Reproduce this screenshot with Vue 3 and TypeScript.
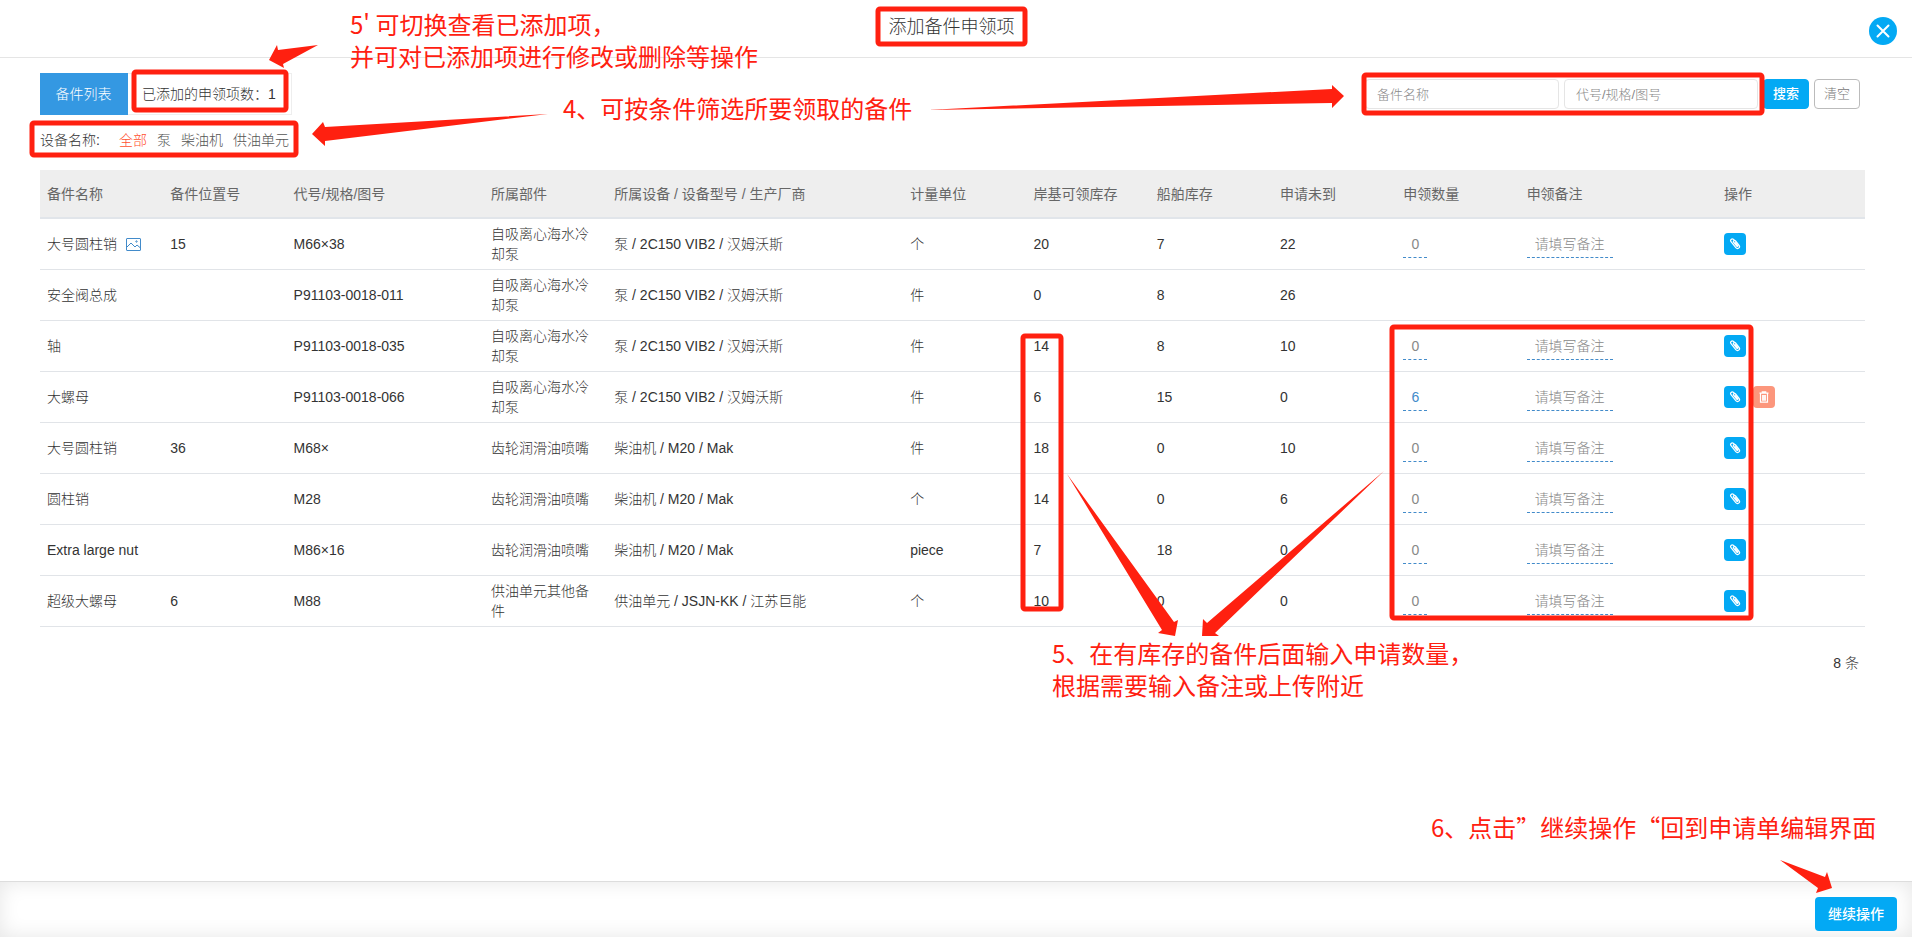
<script setup lang="ts">
import { ref } from 'vue'

interface Part {
  name: string
  image?: boolean
  position: string
  code: string
  component: string
  equipment: string
  unit: string
  shore: number
  ship: number
  pending: number
  quantity: string
  editable: boolean
}

const columns = [
  { title: '备件名称', span: 5 },
  { title: '备件位置号', span: 5 },
  { title: '代号/规格/图号', span: 8 },
  { title: '所属部件', span: 5 },
  { title: '所属设备 / 设备型号 / 生产厂商', span: 12 },
  { title: '计量单位', span: 5 },
  { title: '岸基可领库存', span: 5 },
  { title: '船舶库存', span: 5 },
  { title: '申请未到', span: 5 },
  { title: '申领数量', span: 5 },
  { title: '申领备注', span: 8 },
  { title: '操作', span: 6 },
]
const totalSpan = columns.reduce((sum, c) => sum + c.span, 0)

const pump = '泵 / 2C150 VIB2 / 汉姆沃斯'
const diesel = '柴油机 / M20 / Mak'
const pumpPart = '自吸离心海水冷却泵'
const nozzle = '齿轮润滑油喷嘴'

const parts = ref<Part[]>([
  { name: '大号圆柱销', image: true, position: '15', code: 'M66×38', component: pumpPart, equipment: pump, unit: '个', shore: 20, ship: 7, pending: 22, quantity: '', editable: true },
  { name: '安全阀总成', position: '', code: 'P91103-0018-011', component: pumpPart, equipment: pump, unit: '件', shore: 0, ship: 8, pending: 26, quantity: '', editable: false },
  { name: '轴', position: '', code: 'P91103-0018-035', component: pumpPart, equipment: pump, unit: '件', shore: 14, ship: 8, pending: 10, quantity: '', editable: true },
  { name: '大螺母', position: '', code: 'P91103-0018-066', component: pumpPart, equipment: pump, unit: '件', shore: 6, ship: 15, pending: 0, quantity: '6', editable: true },
  { name: '大号圆柱销', position: '36', code: 'M68×', component: nozzle, equipment: diesel, unit: '件', shore: 18, ship: 0, pending: 10, quantity: '', editable: true },
  { name: '圆柱销', position: '', code: 'M28', component: nozzle, equipment: diesel, unit: '个', shore: 14, ship: 0, pending: 6, quantity: '', editable: true },
  { name: 'Extra large nut', position: '', code: 'M86×16', component: nozzle, equipment: diesel, unit: 'piece', shore: 7, ship: 18, pending: 0, quantity: '', editable: true },
  { name: '超级大螺母', position: '6', code: 'M88', component: '供油单元其他备件', equipment: '供油单元 / JSJN-KK / 江苏巨能', unit: '个', shore: 10, ship: 0, pending: 0, quantity: '', editable: true },
])

const devices = ['全部', '泵', '柴油机', '供油单元']
const activeDevice = ref('全部')
const nameQuery = ref('')
const codeQuery = ref('')

const frames = [
  { x: 878, y: 9, w: 147, h: 35 },
  { x: 134, y: 72, w: 152, h: 38 },
  { x: 32, y: 123, w: 264, h: 32 },
  { x: 1364, y: 75, w: 398, h: 38 },
  { x: 1023, y: 336, w: 38, h: 273 },
  { x: 1392, y: 327, w: 359, h: 291 },
]
const arrows = [
  '318,45 278,50 277,45 269,60 284,68 283,64',
  '548,114 325,127 323,122 312,134 325,146 325,141',
  '928,110 1332,89 1332,85 1344,96 1332,108 1332,103',
  '1067,474 1174,622 1178,620 1175,636 1158,633 1162,630',
  '1384,471 1207,623 1203,619 1202,636 1219,636 1215,633',
  '1780,860 1825,877 1827,872 1832,888 1816,893 1818,888',
]
const notes = [
  { x: 350, y: 34, text: "5' 可切换查看已添加项，" },
  { x: 350, y: 66, text: '并可对已添加项进行修改或删除等操作' },
  { x: 563, y: 118, text: '4、可按条件筛选所要领取的备件' },
  { x: 1052, y: 663, text: '5、在有库存的备件后面输入申请数量，' },
  { x: 1052, y: 695, text: '根据需要输入备注或上传附近' },
  { x: 1431, y: 837, text: '6、点击”继续操作“回到申请单编辑界面' },
]
</script>

<template>
  <div class="page" lang="zh-CN">
    <header class="top">
      <h1>添加备件申领项</h1>
      <button class="close" type="button" aria-label="关闭">
        <svg width="28" height="28" viewBox="0 0 28 28"><path d="M8.5 8.5l11 11M19.5 8.5l-11 11" stroke="#fff" stroke-width="2" stroke-linecap="round" /></svg>
      </button>
    </header>

    <main class="content">
      <div class="toolbar">
        <nav class="tabs">
          <button class="tab active" type="button">备件列表</button>
          <button class="tab" type="button">已添加的申领项数：1</button>
        </nav>
        <form class="search" @submit.prevent>
          <input v-model="nameQuery" type="text" placeholder="备件名称" aria-label="备件名称" />
          <input v-model="codeQuery" type="text" placeholder="代号/规格/图号" aria-label="代号/规格/图号" />
          <button class="btn primary" type="submit">搜索</button>
          <button class="btn" type="reset">清空</button>
        </form>
      </div>

      <div class="filter">
        <span class="label">设备名称:</span>
        <a v-for="d in devices" :key="d" href="#" :class="{ on: d === activeDevice }" @click.prevent="activeDevice = d">{{ d }}</a>
      </div>

      <table>
        <colgroup>
          <col v-for="c in columns" :key="c.title" :style="{ width: (c.span / totalSpan) * 100 + '%' }" />
        </colgroup>
        <thead>
          <tr>
            <th v-for="c in columns" :key="c.title" scope="col">{{ c.title }}</th>
          </tr>
        </thead>
        <tbody>
          <tr v-for="(p, i) in parts" :key="i">
            <td>
              <span class="name">
                {{ p.name }}
                <svg v-if="p.image" width="15" height="13" viewBox="0 0 15 13" fill="none" stroke="#428bca">
                  <rect x=".5" y=".5" width="14" height="12" rx=".5" />
                  <path d="M1 9l4-4 4 4 2-2 3.500 3" />
                  <circle cx="10.500" cy="3.500" r=".7" />
                </svg>
              </span>
            </td>
            <td>{{ p.position }}</td>
            <td>{{ p.code }}</td>
            <td>{{ p.component }}</td>
            <td>{{ p.equipment }}</td>
            <td>{{ p.unit }}</td>
            <td>{{ p.shore }}</td>
            <td>{{ p.ship }}</td>
            <td>{{ p.pending }}</td>
            <td><input v-if="p.editable" v-model="p.quantity" class="edit qty" type="text" placeholder="0" aria-label="申领数量" /></td>
            <td><input v-if="p.editable" class="edit remark" type="text" placeholder="请填写备注" aria-label="申领备注" /></td>
            <td>
              <div v-if="p.editable" class="actions">
                <button class="icon" type="button" aria-label="上传附件">
                  <svg width="12" height="12" viewBox="0 0 12 12" fill="none" stroke="#fff" stroke-width="1.200" stroke-linecap="round">
                    <path d="M6.500 3.200L4.300 1.300C2.800.200.700 2 2 3.700L6.800 9.700C8.600 11.800 11.700 9.500 10.100 7.300L6.600 3C5.500 1.800 3.700 3 4.700 4.500L7.700 8.200C8.400 8.900 9.200 8.200 8.700 7.500L6.200 4.600" />
                  </svg>
                </button>
                <button v-if="p.quantity" class="icon danger" type="button" aria-label="删除">
                  <svg width="10" height="12" viewBox="0 0 10 12" fill="none" stroke="#fff" stroke-width="1.200">
                    <path d="M.5 2.200h9M3.300 2V.8h3.400V2M1.500 2.500v8.700h7V2.500M3.700 4v5.700M5 4v5.700M6.300 4v5.700" />
                  </svg>
                </button>
              </div>
            </td>
          </tr>
        </tbody>
      </table>
      <p class="total">{{ parts.length }} 条</p>
    </main>

    <footer class="bottom">
      <button class="continue" type="button">继续操作</button>
    </footer>

    <svg class="guide" viewBox="0 0 1912 937" preserveAspectRatio="xMinYMin meet">
      <rect v-for="(f, i) in frames" :key="'f' + i" :x="f.x" :y="f.y" :width="f.w" :height="f.h" rx="2" />
      <polygon v-for="(a, i) in arrows" :key="'a' + i" :points="a" />
      <text v-for="(n, i) in notes" :key="'n' + i" :x="n.x" :y="n.y">{{ n.text }}</text>
    </svg>
  </div>
</template>

<style>
body {
  margin: 0;
  background: #fff;
}
</style>

<style scoped>
.page {
  position: relative;
  display: flex;
  flex-direction: column;
  min-height: 100vh;
  font: 300 14px/20px "Liberation Sans", "Noto Sans CJK SC", sans-serif;
  color: #333;
}
.page * {
  box-sizing: border-box;
}
button,
input {
  font: inherit;
  color: inherit;
  margin: 0;
}
button {
  padding: 0;
  border: 0;
  cursor: pointer;
}
.top {
  display: flex;
  align-items: center;
  height: 58px;
  padding: 0 15px 0 34px;
  border-bottom: 1px solid #e5e5e5;
}
h1 {
  flex: 1;
  margin: 0;
  padding-bottom: 4px;
  text-align: center;
  font-size: 18px;
  font-weight: 300;
  line-height: 24px;
}
.close {
  display: flex;
  width: 28px;
  height: 28px;
  margin-top: 4px;
  border-radius: 50%;
  background: #03a9f4;
}
.content {
  flex: 1;
  padding: 15px 47px 0 40px;
}
.toolbar {
  display: flex;
  justify-content: space-between;
  align-items: center;
}
.tabs {
  display: flex;
}
.tab {
  height: 42px;
  padding: 0 15px 0 14px;
  background: #fff;
  border: 1px solid #eee;
  border-left: 0;
}
.tab.active {
  width: 88px;
  background: #3498e2;
  border: 0;
  color: #fff;
}
.search {
  display: flex;
  gap: 5px;
  padding-right: 5px;
}
.search input {
  width: 194px;
  height: 30px;
  padding: 0 11px;
  border: 1px solid #e5e5e5;
  border-radius: 4px;
  font-size: 13px;
  outline: 0;
}
.search input::placeholder {
  color: #888;
}
.btn {
  width: 46px;
  height: 30px;
  border: 1px solid #bbb;
  border-radius: 4px;
  background: #fff;
  color: #777;
  font-size: 13px;
}
.btn.primary {
  border-color: #03a9f4;
  background: #03a9f4;
  color: #fff;
  font-weight: 500;
}
.filter {
  display: flex;
  gap: 10px;
  margin: 15px 0 20px;
}
.filter .label {
  width: 69px;
}
.filter a {
  color: #555;
  text-decoration: none;
}
.filter a.on {
  color: #ff5030;
}
table {
  width: 100%;
  table-layout: fixed;
  border-collapse: separate;
  border-spacing: 0;
}
th {
  height: 49px;
  padding: 0 7px;
  border-bottom: 2px solid #e1e5ea;
  background: #eee;
  color: #666;
  font-weight: 400;
  text-align: left;
  white-space: nowrap;
}
td {
  height: 51px;
  padding: 5px 9px 5px 7px;
  border-bottom: 1px solid #e1e4e8;
  vertical-align: middle;
}
.name {
  display: flex;
  align-items: center;
  gap: 9px;
}
.edit {
  display: block;
  height: 28px;
  padding: 0;
  border: 0;
  border-bottom: 1px dashed #428bca;
  background: transparent;
  color: #428bca;
  text-align: center;
  outline: 0;
}
.edit::placeholder {
  color: #888;
  opacity: 1;
}
.qty {
  width: 24px;
}
.remark {
  width: 86px;
}
.actions {
  display: flex;
  gap: 7px;
}
.icon {
  display: flex;
  align-items: center;
  justify-content: center;
  width: 22px;
  height: 22px;
  border-radius: 4px;
  background: #03a9f4;
}
.icon.danger {
  background: #fc967c;
}
.total {
  margin: 26px 6px 26px 0;
  text-align: right;
}
.bottom {
  display: flex;
  justify-content: flex-end;
  align-items: flex-end;
  height: 56px;
  padding: 0 15px 6px;
  border-top: 1px solid #ddd;
  box-shadow: inset 0 0 20px rgba(0, 0, 0, 0.1);
}
.continue {
  width: 82px;
  height: 34px;
  border-radius: 4px;
  background: #03a9f4;
  color: #fff;
  font-weight: 500;
}
.guide {
  position: absolute;
  top: 0;
  left: 0;
  width: 100%;
  pointer-events: none;
  fill: #ff2010;
}
.guide rect {
  fill: none;
  stroke: #ff2010;
  stroke-width: 5px;
}
.guide text {
  font: 400 24px/32px "Noto Sans CJK SC", sans-serif;
}
</style>
